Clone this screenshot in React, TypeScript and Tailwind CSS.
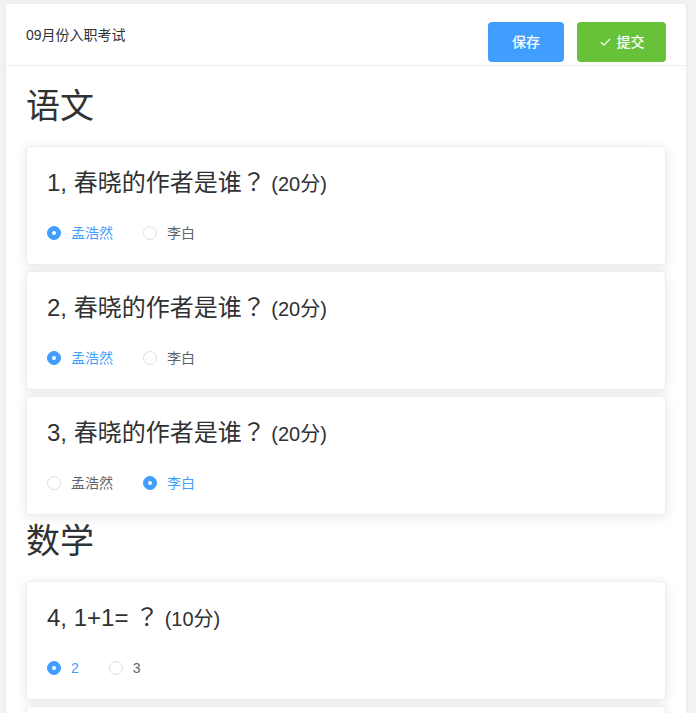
import { Check } from "lucide-react";
import { useState } from "react";

type Question = {
  id: number;
  title: string;
  score: number;
  options: string[];
  answer: string;
};

const sections: { name: string; questions: Question[] }[] = [
  {
    name: "语文",
    questions: [
      { id: 1, title: "春晓的作者是谁", score: 20, options: ["孟浩然", "李白"], answer: "孟浩然" },
      { id: 2, title: "春晓的作者是谁", score: 20, options: ["孟浩然", "李白"], answer: "孟浩然" },
      { id: 3, title: "春晓的作者是谁", score: 20, options: ["孟浩然", "李白"], answer: "李白" },
    ],
  },
  {
    name: "数学",
    questions: [
      { id: 4, title: "1+1= ", score: 10, options: ["2", "3"], answer: "2" },
      { id: 5, title: "2+2= ", score: 10, options: ["4", "5"], answer: "4" },
    ],
  },
];

function QuestionCard({ q }: { q: Question }) {
  const [value, setValue] = useState(q.answer);

  return (
    <div className="h-[119px] mb-[6px] bg-white border border-[#ebeef5] rounded-[4px] shadow-[0_2px_12px_0_rgba(0,0,0,0.1)] px-5 pt-[18px]">
      <h3 className="text-[24px] leading-[32px] text-[#303133] font-normal whitespace-pre">
        {q.id}, {q.title}
        {/* TC font keeps the full-width ？ centred */}
        <span style={{ fontFamily: '"Noto Sans CJK TC", sans-serif' }}>？</span>
        <span className="text-[20px]"> ({q.score}分)</span>
      </h3>
      <div className="mt-[23px] h-5 flex items-center">
        {q.options.map((opt) => {
          const checked = value === opt;
          return (
            <label
              key={opt}
              onClick={() => setValue(opt)}
              className="flex items-center mr-[30px] cursor-pointer"
            >
              {checked ? (
                <span className="w-[14px] h-[14px] rounded-full bg-[#409eff] border border-[#409eff] flex items-center justify-center">
                  <span className="w-[4px] h-[4px] rounded-full bg-white" />
                </span>
              ) : (
                <span className="w-[14px] h-[14px] rounded-full bg-white border border-[#dcdfe6]" />
              )}
              <span
                className={`pl-[10px] text-[14px] leading-5 ${
                  checked ? "text-[#409eff]" : "text-[#606266]"
                }`}
              >
                {opt}
              </span>
            </label>
          );
        })}
      </div>
    </div>
  );
}

export default function App() {
  return (
    <div
      className="min-h-screen bg-[#f2f2f2] pt-[4px] pl-[6px] pr-[10px]"
      style={{ fontFamily: '"Liberation Sans", "Noto Sans CJK SC", sans-serif' }}
    >
      <div className="bg-white rounded-[4px] shadow-[0_1px_4px_0_rgba(0,0,0,0.05)]">
        {/* Header */}
        <div className="h-[62px] border-b border-[#ebeef5] px-5 flex justify-between items-start">
          <div className="mt-[21px] text-[14px] leading-5 text-[#303133]">09月份入职考试</div>
          <div className="mt-[18px] flex gap-[13px]">
            <button className="w-[76px] h-[40px] rounded-[4px] bg-[#409eff] text-white text-[14px] font-medium">
              保存
            </button>
            <button className="w-[89px] h-[40px] rounded-[4px] bg-[#67c23a] text-white text-[14px] font-medium flex items-center justify-center gap-[5px]">
              <Check className="w-[13px] h-[13px]" strokeWidth={2} />
              提交
            </button>
          </div>
        </div>

        {/* Body */}
        <div className="px-5 pt-5 pb-5">
          {sections.map((s) => (
            <div key={s.name}>
              <h1 className="text-[34px] leading-[40px] text-[#303133] font-normal mb-5">{s.name}</h1>
              {s.questions.map((q) => (
                <QuestionCard key={q.id} q={q} />
              ))}
            </div>
          ))}
        </div>
      </div>
    </div>
  );
}
